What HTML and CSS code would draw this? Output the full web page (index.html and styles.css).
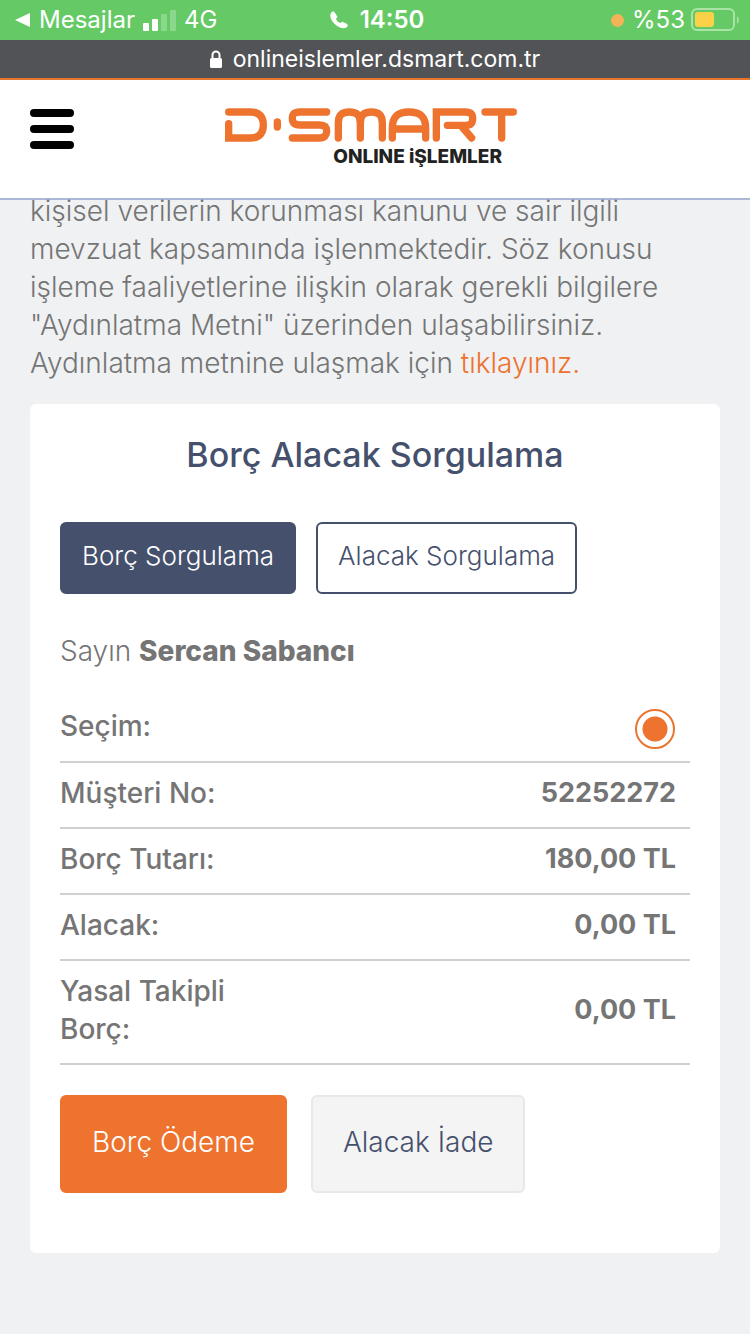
FILE: index.html
```html
<!DOCTYPE html>
<html lang="tr">
<head>
<meta charset="utf-8">
<meta name="viewport" content="width=device-width, initial-scale=1">
<title>D-Smart Online İşlemler</title>
<link rel="stylesheet" href="styles.css">
</head>
<body>
<div class="status">
  <div class="status-left">
    <svg class="back" viewBox="0 0 16 14" aria-hidden="true"><path d="M0 7 15 0v14z"/></svg>
    <span>Mesajlar</span>
    <svg class="signal" viewBox="0 0 33 21" aria-hidden="true"><rect y="13" width="6" height="8" rx="1"/><rect x="9" y="9" width="6" height="12" rx="1"/><rect class="dim" x="18" y="4" width="6" height="17" rx="1"/><rect class="dim" x="27" width="6" height="21" rx="1"/></svg>
    <span>4G</span>
  </div>
  <div class="status-time">
    <svg class="phone" viewBox="0 0 18 18" aria-hidden="true"><path d="M1 2C2 0 4 0 5 2l2 3C8 7 6 7 6 8c1 2 2 3 4 4 1 0 2-2 3-1l4 2c1 1 1 2 0 3C11 21-3 9 1 2z"/></svg>
    <span>14:50</span>
  </div>
  <div class="status-right">
    <span class="mic-dot"></span>
    <span>%53</span>
    <svg class="battery" viewBox="0 0 48 24" aria-hidden="true"><rect class="shell" x="1" y="1" width="42" height="21" rx="5"/><rect class="level" x="4" y="4" width="19" height="15" rx="3"/><path class="tip" d="M46 8q4 4 0 8z"/></svg>
  </div>
</div>
<div class="address">
  <svg class="lock" viewBox="0 0 12 18" aria-hidden="true"><path class="shackle" d="M2.500 9V5a3.500 3.500 0 0 1 7 0v4"/><rect y="8" width="12" height="10" rx="1.500"/></svg>
  <span>onlineislemler.dsmart.com.tr</span>
</div>
<header class="header">
  <button class="menu" type="button" aria-label="Menü"><span></span><span></span><span></span></button>
  <a class="brand" href="#" aria-label="D-Smart Online İşlemler">
    <svg class="logo" viewBox="15 23 876 102" aria-hidden="true"><path d="M26 70V113H92C118 113 130 99 130 74S118 35 92 35H26M172 65V80M320 35H240C223 35 217 41 217 54S224 74 240 74H299C314 74 320 81 320 93S314 113 299 113H217M355 113V68C355 45 365 35 388 35S421 45 421 68V113M421 68C421 45 431 35 454 35S487 45 487 68V113M517 113V84C517 50 533 35 567 35S617 50 617 84V113M517 86H617M649 113V35H736C751 35 758 41 758 55S751 75 736 75H682M724 77 755 113M795 35H880M845 35V113"/></svg>
    <span class="brand-sub">ONLINE iŞLEMLER</span>
  </a>
</header>
<main class="page">
  <p class="notice">kişisel verilerin korunması kanunu ve sair ilgili<br>mevzuat kapsamında işlenmektedir. Söz konusu<br>işleme faaliyetlerine ilişkin olarak gerekli bilgilere<br>"Aydınlatma Metni" üzerinden ulaşabilirsiniz.<br>Aydınlatma metnine ulaşmak için <a href="#">tıklayınız.</a></p>
  <section class="card">
    <h1>Borç Alacak Sorgulama</h1>
    <div class="tabs">
      <button class="tab active" type="button">Borç Sorgulama</button>
      <button class="tab" type="button">Alacak Sorgulama</button>
    </div>
    <p class="greeting">Sayın <strong>Sercan Sabancı</strong></p>
    <table class="details">
      <tr><th scope="row"><label for="choice">Seçim:</label></th><td class="choice"><input id="choice" type="radio" name="choice" checked></td></tr>
      <tr><th scope="row">Müşteri No:</th><td>52252272</td></tr>
      <tr><th scope="row">Borç Tutarı:</th><td>180,00 TL</td></tr>
      <tr><th scope="row">Alacak:</th><td>0,00 TL</td></tr>
      <tr><th scope="row">Yasal Takipli<br>Borç:</th><td>0,00 TL</td></tr>
    </table>
    <div class="actions">
      <button class="action primary" type="button">Borç Ödeme</button>
      <button class="action" type="button">Alacak İade</button>
    </div>
  </section>
</main>
</body>
</html>
```
FILE: styles.css
```css
* { box-sizing: border-box; }
body {
  margin: 0;
  min-height: 100vh;
  background: #f0f1f3;
  color: #757575;
  font: 300 28px/38px Inter, "Noto Sans", sans-serif;
}
button { font: inherit; cursor: pointer; }
.status {
  display: grid;
  grid-template-columns: 1fr auto 1fr;
  align-items: center;
  height: 40px;
  padding: 0 11px 0 15px;
  background: #65ca66;
  color: #fff;
  font-size: 24px;
  font-weight: 400;
}
.status-left, .status-right, .status-time { display: flex; align-items: center; gap: 8px; }
.status-right { justify-content: flex-end; gap: 6px; }
.status-time { gap: 12px; font-weight: 600; }
.status svg { fill: #fff; }
.back { width: 16px; height: 14px; }
.signal { width: 33px; height: 21px; }
.dim { opacity: .25; }
.phone { width: 18px; height: 18px; }
.mic-dot { width: 13px; height: 13px; margin-right: 2px; border-radius: 50%; background: #f4b357; }
.battery { width: 48px; height: 24px; }
.status .shell { fill: none; stroke: #a9e3a8; stroke-width: 2; }
.status .level { fill: #fbd147; }
.status .tip { fill: #a9e3a8; }
.address {
  display: flex;
  align-items: center;
  justify-content: center;
  gap: 11px;
  height: 40px;
  border-bottom: 2px solid #e8762f;
  background: #525356;
  color: #fff;
  font-size: 23px;
  font-weight: 400;
}
.lock { width: 12px; height: 18px; fill: #fff; }
.shackle { fill: none; stroke: #fff; stroke-width: 2; }
.header {
  display: grid;
  grid-template-columns: 1fr auto 1fr;
  align-items: start;
  height: 120px;
  padding: 28px 38px 0 30px;
  border-bottom: 2px solid #aab8d6;
  background: #fff;
}
.menu {
  display: flex;
  flex-direction: column;
  gap: 8px;
  width: 44px;
  padding: 1px 0;
  border: 0;
  background: none;
}
.menu span { width: 44px; height: 8px; border-radius: 4px; background: #000; }
.brand { display: flex; flex-direction: column; width: 292px; text-decoration: none; }
.logo { width: 292px; height: 34px; fill: none; stroke: #ed732f; stroke-width: 22; stroke-linecap: round; }
.brand-sub {
  align-self: flex-end;
  margin-right: 15px;
  color: #222;
  font-size: 19px;
  font-weight: 800;
  line-height: 30px;
}
.page { padding: 0 30px 80px; }
.notice { margin: -8px 0 0; }
.notice a { color: #ed732f; text-decoration: none; }
.card { margin-top: 22px; padding: 30px 30px 60px; border-radius: 6px; background: #fff; }
h1 {
  margin: 0;
  color: #45506d;
  font-size: 34px;
  font-weight: 500;
  line-height: 42px;
  text-align: center;
}
.tabs { display: flex; gap: 20px; margin-top: 46px; }
.tab {
  height: 72px;
  padding: 0 20px 4px;
  border: 2px solid #45506d;
  border-radius: 6px;
  background: #fff;
  color: #45506d;
  font-size: 26px;
}
.tab.active { background: #45506d; color: #fff; }
.greeting { margin: 38px 0 0; }
.greeting strong { font-weight: 800; }
.details { width: 100%; margin-top: 25px; border-collapse: collapse; }
.details tr { border-bottom: 2px solid #d0d0d0; }
.details th { padding: 11px 0 15px; font-weight: 500; text-align: left; }
.details td { padding: 11px 14px 15px 0; font-size: 27px; font-weight: 700; text-align: right; }
.details .choice { padding: 14px 15px 12px 0; }
.details input {
  display: block;
  width: 40px;
  height: 40px;
  margin: 0 0 0 auto;
  border: 2px solid #e8762f;
  border-radius: 50%;
  background: radial-gradient(circle, #ed732f 12px, #fff 13px);
  appearance: none;
}
.actions { display: flex; gap: 24px; margin-top: 30px; }
.action {
  height: 98px;
  padding: 0 30px 4px;
  border: 2px solid #e8e8e8;
  border-radius: 6px;
  background: #f4f4f4;
  color: #45506d;
}
.action.primary { border-color: #ed732f; background: #ed732f; color: #fff; }
```
